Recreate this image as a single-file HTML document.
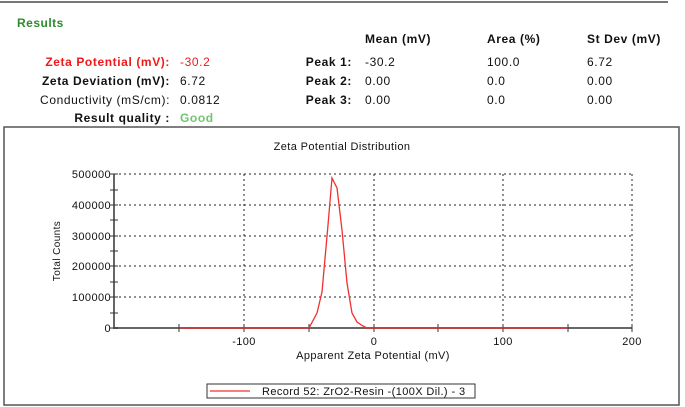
<!DOCTYPE html>
<html><head><meta charset="utf-8"><style>
html,body{margin:0;padding:0;background:#fff;width:685px;height:407px;overflow:hidden}
svg{display:block}
text{font-family:"Liberation Sans",Arial,sans-serif}
.b{font-weight:bold;font-size:12px;fill:#111;letter-spacing:0.6px}
.v{font-size:12px;fill:#111;letter-spacing:0.6px}
.t{font-size:11px;fill:#111;letter-spacing:0.4px}
</style></head><body>
<svg width="685" height="407" viewBox="0 0 685 407">
<line x1="0" y1="2" x2="668" y2="2" stroke="#777" stroke-width="2"/>
<text x="17" y="27" font-size="12" font-weight="bold" fill="#2e8b2e" letter-spacing="0.5">Results</text>
<text class="b" x="365" y="43">Mean (mV)</text>
<text class="b" x="487" y="43">Area (%)</text>
<text class="b" x="587" y="43">St Dev (mV)</text>
<g text-anchor="end">
<text class="b" x="170" y="66" style="fill:#f01818">Zeta Potential (mV):</text>
<text class="b" x="170" y="85">Zeta Deviation (mV):</text>
<text class="v" x="170" y="104">Conductivity (mS/cm):</text>
<text class="b" x="170" y="122">Result quality :</text>
<text class="b" x="352" y="66">Peak 1:</text>
<text class="b" x="352" y="85">Peak 2:</text>
<text class="b" x="352" y="104">Peak 3:</text>
</g>
<text class="v" x="180" y="66" style="fill:#f01818">-30.2</text>
<text class="v" x="180" y="85">6.72</text>
<text class="v" x="180" y="104">0.0812</text>
<text class="b" x="180" y="122" style="fill:#6cc86c">Good</text>
<text class="v" x="365" y="66">-30.2</text><text class="v" x="487" y="66">100.0</text><text class="v" x="587" y="66">6.72</text>
<text class="v" x="365" y="85">0.00</text><text class="v" x="487" y="85">0.0</text><text class="v" x="587" y="85">0.00</text>
<text class="v" x="365" y="104">0.00</text><text class="v" x="487" y="104">0.0</text><text class="v" x="587" y="104">0.00</text>
<rect x="4" y="127" width="675" height="278" fill="none" stroke="#555" stroke-width="1.5"/>
<text class="t" x="342" y="150" text-anchor="middle">Zeta Potential Distribution</text>
<g stroke="#222" stroke-width="1" stroke-dasharray="2,3" fill="none">
<line x1="114" y1="174" x2="632" y2="174"/>
<line x1="114" y1="205" x2="632" y2="205"/>
<line x1="114" y1="236" x2="632" y2="236"/>
<line x1="114" y1="266" x2="632" y2="266"/>
<line x1="114" y1="297" x2="632" y2="297"/>
<line x1="244" y1="174" x2="244" y2="328"/>
<line x1="374" y1="174" x2="374" y2="328"/>
<line x1="503" y1="174" x2="503" y2="328"/>
<line x1="632" y1="174" x2="632" y2="328"/>
</g>
<line x1="114" y1="174" x2="114" y2="329" stroke="#333" stroke-width="1.5"/>
<line x1="114" y1="328" x2="632" y2="328" stroke="#666" stroke-width="2"/>
<g stroke="#333" stroke-width="1">
<line x1="110" y1="174" x2="118" y2="174"/><line x1="110" y1="190" x2="118" y2="190"/>
<line x1="110" y1="205" x2="118" y2="205"/><line x1="110" y1="220" x2="118" y2="220"/>
<line x1="110" y1="236" x2="118" y2="236"/><line x1="110" y1="251" x2="118" y2="251"/>
<line x1="110" y1="266" x2="118" y2="266"/><line x1="110" y1="282" x2="118" y2="282"/>
<line x1="110" y1="297" x2="118" y2="297"/><line x1="110" y1="313" x2="118" y2="313"/>
<line x1="110" y1="328" x2="118" y2="328"/>
<line x1="179" y1="324" x2="179" y2="332"/><line x1="244" y1="324" x2="244" y2="332"/>
<line x1="309" y1="324" x2="309" y2="332"/><line x1="374" y1="324" x2="374" y2="332"/>
<line x1="438" y1="324" x2="438" y2="332"/><line x1="503" y1="324" x2="503" y2="332"/>
<line x1="568" y1="324" x2="568" y2="332"/><line x1="632" y1="324" x2="632" y2="332"/>
</g>
<polyline fill="none" stroke="#f03030" stroke-width="1.3" points="179,328 309,328 317,313 322,292 328,225 332,178 337,188 342,230 347,283 352,313 357,322 363,326 367,328 568,328"/>
<g text-anchor="end">
<text class="t" x="111" y="178">500000</text>
<text class="t" x="111" y="209">400000</text>
<text class="t" x="111" y="240">300000</text>
<text class="t" x="111" y="270">200000</text>
<text class="t" x="111" y="301">100000</text>
<text class="t" x="111" y="332">0</text>
</g>
<g text-anchor="middle">
<text class="t" x="244" y="345">-100</text>
<text class="t" x="374" y="345">0</text>
<text class="t" x="503" y="345">100</text>
<text class="t" x="632" y="345">200</text>
<text class="t" x="373" y="359">Apparent Zeta Potential (mV)</text>
<text class="t" transform="translate(60,251) rotate(-90)" style="font-size:10px">Total Counts</text>
</g>
<rect x="207" y="384" width="268" height="14" fill="#fff" stroke="#333" stroke-width="1"/>
<line x1="210" y1="391" x2="250" y2="391" stroke="#f03030" stroke-width="1.2"/>
<text class="t" x="262" y="395">Record 52: ZrO2-Resin -(100X Dil.) -  3</text>
</svg>
</body></html>
